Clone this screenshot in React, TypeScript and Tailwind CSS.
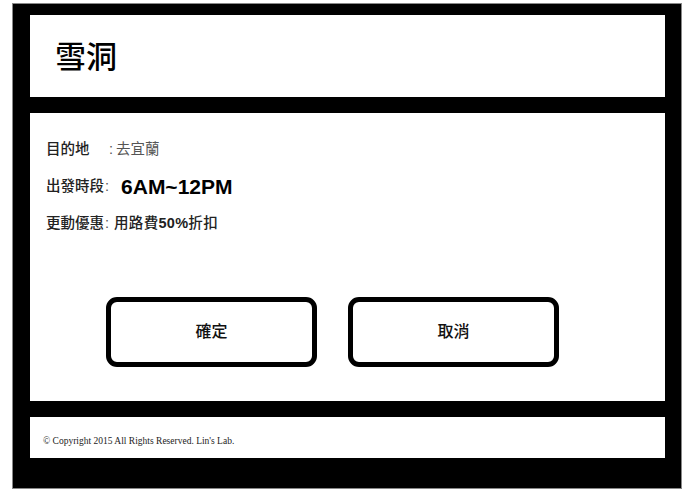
export default function App() {
  return (
    <div className="min-h-screen bg-white pt-[3px] pl-[12px] pr-[13px] pb-[4px] font-['Liberation_Sans','Noto_Sans_CJK_TC',sans-serif]">
      {/* outer frame */}
      <div className="bg-black border border-[#888] pt-[11px] pl-[17px] pr-[16px] pb-[30px] flex flex-col gap-[16px]">
        {/* header */}
        <div className="bg-white h-[82px] flex items-center pl-[25px] pb-[4px]">
          <h1 className="text-[31px] leading-none text-black font-['Noto_Sans_CJK_TC',sans-serif] font-medium">雪洞</h1>
        </div>

        {/* main panel */}
        <div className="bg-white h-[288px] pt-[25px] pl-[16px] flex flex-col">
          <div className="flex flex-col gap-[13px] text-[14.5px] text-[#222] font-medium">
            <div className="flex items-center h-[24px]">
              <span className="w-[63px]">目的地</span>
              <span className="text-[#555] font-normal">:</span>
              <span className="ml-[3px] text-[#555] font-normal">去宜蘭</span>
            </div>
            <div className="flex items-center h-[24px]">
              <span>出發時段</span>
              <span className="ml-[1px] text-[#555] font-normal">:</span>
              <span className="ml-[12px] text-[21px] font-bold text-black">6AM~12PM</span>
            </div>
            <div className="flex items-center h-[24px]">
              <span>更動優惠</span>
              <span className="ml-[1px] text-[#555] font-normal">:</span>
              <span className="ml-[5px] tracking-[0.3px]">
                用路費<span className="font-bold">50%</span>折扣
              </span>
            </div>
          </div>

          <div className="mt-[61px] pl-[60px] flex gap-[31px]">
            <button className="w-[211px] h-[70px] border-[5px] border-black rounded-[11px] bg-white text-[16px] text-[#111] font-medium">
              確定
            </button>
            <button className="w-[211px] h-[70px] border-[5px] border-black rounded-[11px] bg-white text-[16px] text-[#111] font-medium">
              取消
            </button>
          </div>
        </div>

        {/* footer */}
        <div className="bg-white h-[41px] flex items-center pl-[13px] pt-[7px]">
          <p className="text-[9.5px] text-[#222] font-['Liberation_Serif',serif]">
            © Copyright 2015 All Rights Reserved. Lin's Lab.
          </p>
        </div>
      </div>
    </div>
  );
}
